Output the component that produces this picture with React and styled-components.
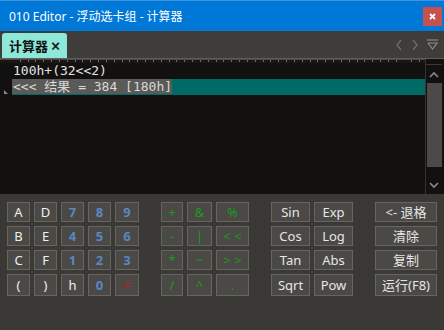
import React from 'react';
import styled, { createGlobalStyle } from 'styled-components';

const Global = createGlobalStyle`
  html, body { margin: 0; padding: 0; background: #3b3935; }
  body { width: 444px; height: 330px; overflow: hidden; }
`;

const Window = styled.div`
  width: 444px;
  height: 330px;
  display: flex;
  flex-direction: column;
  background: #3b3935;
  font-family: "Noto Sans", "Noto Sans CJK SC", sans-serif;
`;

const TitleBar = styled.div`
  height: 31px;
  flex: none;
  box-sizing: border-box;
  background: #0078d7;
  border-top: 1px solid #3d95e2;
  display: flex;
  align-items: center;
  padding: 0 2px 0 9px;
  color: #ffffff;
  font-size: 12px;
`;

const Title = styled.div`
  flex: 1;
  padding-bottom: 1px;
`;

const CloseBtn = styled.div`
  width: 19px;
  height: 19px;
  background: #c75050;
  display: flex;
  align-items: center;
  justify-content: center;
`;

const TabBar = styled.div`
  height: 27px;
  flex: none;
  background: #3f3d39;
  display: flex;
  align-items: flex-end;
  padding-left: 2px;
`;

const Tab = styled.div`
  height: 25px;
  box-sizing: border-box;
  background: #8ee8d9;
  border-radius: 3px 3px 0 0;
  padding: 0 7px 0 7px;
  display: flex;
  align-items: center;
  gap: 3px;
  color: #111111;
  font-weight: bold;
  font-size: 13px;
`;

const TabClose = styled.span`
  font-size: 16px;
  font-weight: normal;
  line-height: 1;
  -webkit-text-stroke: 0.4px #111;
`;

const TabControls = styled.div`
  margin-left: auto;
  align-self: center;
  display: flex;
  align-items: center;
  gap: 8px;
  padding-right: 6px;
`;

const Editor = styled.div`
  height: 136px;
  flex: none;
  display: flex;
  background: #121110;
  border-top: 1px solid #5f5e5a;
  box-sizing: border-box;
`;

const EditorMain = styled.div`
  flex: 1;
  display: flex;
  flex-direction: column;
`;

const Ruler = styled.div`
  height: 4px;
  flex: none;
  background:
    repeating-linear-gradient(to right, transparent 0, transparent 6.83px, #6d6c68 6.83px, #6d6c68 7.83px) 13px 1px / 100% 2px no-repeat,
    linear-gradient(#4a4945, #4a4945) 0 0 / 100% 1px no-repeat,
    #181716;
`;

const Lines = styled.div`
  flex: 1;
  display: flex;
  flex-direction: column;
  position: relative;
  padding-left: 12px;
`;

const Line = styled.div`
  height: 16px;
  line-height: 16px;
  padding-left: 1px;
  font-family: "DejaVu Sans Mono", "Noto Sans CJK SC", monospace;
  font-size: 13px;
  white-space: pre;
  color: ${p => (p.$result ? '#d8d8d8' : '#e4e4e4')};
  background: ${p => (p.$result ? '#006b66' : 'transparent')};
`;

const Selection = styled.span`
  background: #5a5a58;
  margin-left: -1px;
  padding-left: 1px;
`;

const Marker = styled.div`
  position: absolute;
  left: 4px;
  top: 27px;
  width: 0;
  height: 0;
  border-left: 4px solid #8a8a8a;
  border-top: 4px solid transparent;
`;

const ScrollBar = styled.div`
  width: 19px;
  flex: none;
  box-sizing: border-box;
  border-left: 1px solid #35332f;
  display: flex;
  flex-direction: column;
  align-items: flex-start;
  padding-top: 5px;
`;

const ScrollTop = styled.div`
  width: 16px;
  height: 1px;
  background: #3a3935;
`;

const ScrollArrow = styled.div`
  width: 16px;
  height: 18px;
  display: flex;
  align-items: center;
  justify-content: center;
`;

const Thumb = styled.div`
  width: 15px;
  height: 84px;
  background: #4b4a48;
  margin-left: 1px;
`;

const Spacer = styled.div`
  flex: 1;
`;

const CalcPanel = styled.div`
  flex: 1;
  display: flex;
  gap: 22px;
  padding: 8px 0 0 7px;
`;

const Group = styled.div`
  display: grid;
  grid-template-columns: ${p => p.$cols};
  grid-template-rows: 20px 20px 20px 22px;
  column-gap: 4px;
  row-gap: 4px;
  align-content: start;
`;

const colors = {
  letter: '#f0f0f0',
  num: '#5a87c2',
  op: '#1d9a1d',
  eq: '#e01010',
  fn: '#e6e6e6',
};

const Key = styled.div`
  box-sizing: border-box;
  background: #4a4946;
  border: 1px solid #676560;
  display: flex;
  align-items: center;
  justify-content: center;
  font-size: 13px;
  font-weight: ${p => (p.$kind === 'num' ? 'bold' : 'normal')};
  color: ${p => colors[p.$kind]};
  white-space: pre;
  line-height: 1;
`;

const Chevron = ({ dir, color = '#6f6e6a' }) => {
  const pts = {
    left: '6,1 2,6 6,11',
    right: '2,1 6,6 2,11',
  }[dir];
  return (
    <svg width="8" height="12" viewBox="0 0 8 12">
      <polyline points={pts} fill="none" stroke={color} strokeWidth="1.3" />
    </svg>
  );
};

const VChevron = ({ up }) => (
  <svg width="10" height="7" viewBox="0 0 10 7">
    <polyline
      points={up ? '1,6 5,2 9,6' : '1,1 5,5 9,1'}
      fill="none"
      stroke="#8a8a86"
      strokeWidth="1.6"
    />
  </svg>
);

const numPad = [
  ['A', 'letter'], ['D', 'letter'], ['7', 'num'], ['8', 'num'], ['9', 'num'],
  ['B', 'letter'], ['E', 'letter'], ['4', 'num'], ['5', 'num'], ['6', 'num'],
  ['C', 'letter'], ['F', 'letter'], ['1', 'num'], ['2', 'num'], ['3', 'num'],
  ['(', 'letter'], [')', 'letter'], ['h', 'letter'], ['0', 'num'], ['=', 'eq'],
];

const ops = ['+', '&', '%', '-', '|', '< <', '*', '~', '> >', '/', '^', '.'];
const fns = ['Sin', 'Exp', 'Cos', 'Log', 'Tan', 'Abs', 'Sqrt', 'Pow'];
const actions = ['<- 退格', '清除', '复制', '运行(F8)'];

export default function App() {
  return (
    <>
      <Global />
      <Window>
        <TitleBar>
          <Title>010 Editor - 浮动选卡组 - 计算器</Title>
          <CloseBtn>
            <svg width="7" height="7" viewBox="0 0 7 7">
              <path d="M1 1 L6 6 M6 1 L1 6" stroke="#fff" strokeWidth="1.8" />
            </svg>
          </CloseBtn>
        </TitleBar>
        <TabBar>
          <Tab>
            <span>计算器</span>
            <TabClose>×</TabClose>
          </Tab>
          <TabControls>
            <Chevron dir="left" />
            <Chevron dir="right" />
            <svg width="11" height="12" viewBox="0 0 11 12">
              <line x1="0" y1="1" x2="11" y2="1" stroke="#8a8984" strokeWidth="1.2" />
              <polyline points="1,4 5.5,10 10,4 1,4" fill="none" stroke="#8a8984" strokeWidth="1.2" />
            </svg>
          </TabControls>
        </TabBar>
        <Editor>
          <EditorMain>
            <Ruler />
            <Lines>
              <Line>100h+(32&lt;&lt;2)</Line>
              <Line $result>
                <Selection>{'<<< 结果 = 384 [180h]'}</Selection>
              </Line>
              <Marker />
            </Lines>
          </EditorMain>
          <ScrollBar>
            <ScrollTop />
            <ScrollArrow>
              <VChevron up />
            </ScrollArrow>
            <Thumb />
            <Spacer />
            <ScrollArrow>
              <VChevron />
            </ScrollArrow>
          </ScrollBar>
        </Editor>
        <CalcPanel>
          <Group $cols="23px 23px 23px 23px 24px">
            {numPad.map(([t, k], i) => (
              <Key key={i} $kind={k}>{t}</Key>
            ))}
          </Group>
          <Group $cols="22px 25px 33px">
            {ops.map((t, i) => (
              <Key key={i} $kind="op">{t}</Key>
            ))}
          </Group>
          <Group $cols="39px 39px">
            {fns.map((t, i) => (
              <Key key={i} $kind="fn">{t}</Key>
            ))}
          </Group>
          <Group $cols="62px">
            {actions.map((t, i) => (
              <Key key={i} $kind="fn">{t}</Key>
            ))}
          </Group>
        </CalcPanel>
      </Window>
    </>
  );
}
